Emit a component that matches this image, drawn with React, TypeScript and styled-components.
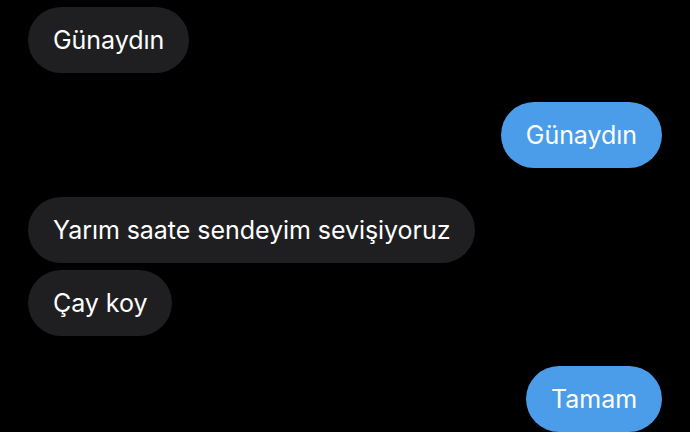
import React from "react";
import styled, { createGlobalStyle } from "styled-components";

const Global = createGlobalStyle`
  html, body { margin: 0; padding: 0; background: #000; }
  body { font-family: "Inter", "Liberation Sans", sans-serif; }
`;

const Thread = styled.div`
  display: flex;
  flex-direction: column;
  padding: 7px 28px 0 28px;
  width: 690px;
  height: 432px;
  box-sizing: border-box;
  background: #000;
  overflow: hidden;
`;

const Bubble = styled.div<{ $mine?: boolean; $gap: number }>`
  align-self: ${(p) => (p.$mine ? "flex-end" : "flex-start")};
  margin-top: ${(p) => p.$gap}px;
  height: 66px;
  box-sizing: border-box;
  padding: 0 25px;
  display: flex;
  align-items: center;
  border-radius: 33px;
  background: ${(p) => (p.$mine ? "#4b9ce9" : "#1f1f21")};
  color: #fff;
  font-size: 25px;
  letter-spacing: -0.05px;
  white-space: nowrap;
`;

const messages = [
  { text: "Günaydın", mine: false, gap: 0 },
  { text: "Günaydın", mine: true, gap: 29 },
  { text: "Yarım saate sendeyim sevişiyoruz", mine: false, gap: 29 },
  { text: "Çay koy", mine: false, gap: 7 },
  { text: "Tamam", mine: true, gap: 30 },
];

export default function App() {
  return (
    <>
      <Global />
      <Thread>
        {messages.map((m, i) => (
          <Bubble key={i} $mine={m.mine} $gap={m.gap}>
            {m.text}
          </Bubble>
        ))}
      </Thread>
    </>
  );
}
